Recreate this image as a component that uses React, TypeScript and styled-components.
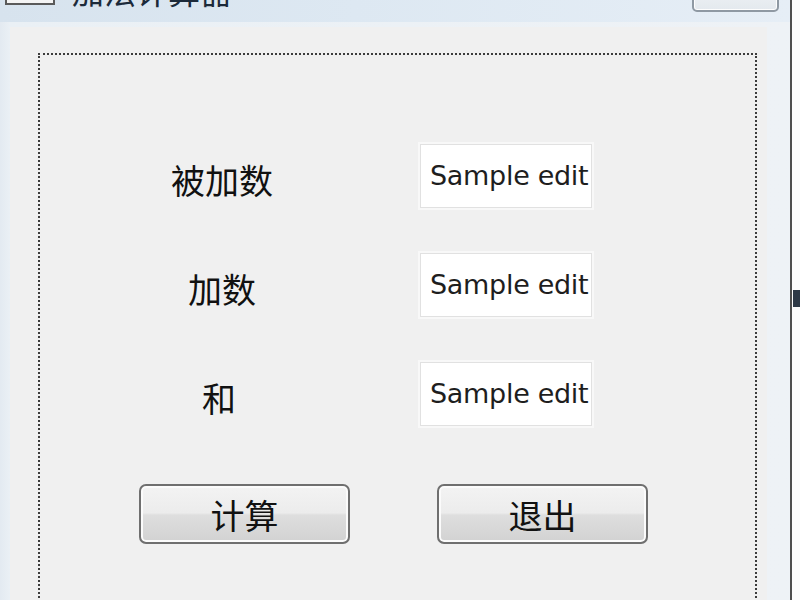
import React from 'react';
import styled, { createGlobalStyle } from 'styled-components';

const GlobalStyle = createGlobalStyle`
  html, body {
    margin: 0;
    padding: 0;
    background: #fbfbfb;
    overflow: hidden;
  }
  body {
    font-family: "Liberation Sans", "Noto Sans CJK SC", sans-serif;
  }
`;

const Page = styled.div`
  display: flex;
  width: 800px;
  height: 600px;
  overflow: hidden;
`;

const Window = styled.div`
  flex: 0 0 792px;
  box-sizing: border-box;
  height: 680px;
  margin-top: -30px;
  display: flex;
  flex-direction: column;
  border-right: 2px solid #4d4d4d;
  background: #e9eff5;
`;

const TitleBar = styled.div`
  flex: 0 0 52px;
  display: flex;
  align-items: flex-start;
  padding: 4px 11px 0 5px;
  box-sizing: border-box;
  background: linear-gradient(90deg, #d7e3ee 0%, #dde8f2 45%, #e6eef6 100%);
`;

const AppIcon = styled.div`
  width: 50px;
  height: 31px;
  box-sizing: border-box;
  border: 2px solid #5a5a5a;
  border-top-color: #8a8a8a;
  background: #f4f4f4;
`;

const Title = styled.div`
  margin: -2px 0 0 17px;
  font-family: "Noto Sans CJK SC", sans-serif;
  font-size: 32px;
  line-height: 36px;
  color: #1c2a3a;
`;

const CloseButton = styled.div`
  margin-left: auto;
  width: 87px;
  height: 38px;
  box-sizing: border-box;
  border: 2px solid #8f99a3;
  border-radius: 5px;
  background: linear-gradient(#f5f7f9, #e4e9ee);
  box-shadow: inset 0 0 0 1px #fdfdfd;
`;

const Frame = styled.div`
  flex: 1;
  display: flex;
  padding: 5px 23px 0 10px;
  background: linear-gradient(90deg, #e3eaf1 0px, #eaf0f5 10px, #eef2f6 100%);
`;

const Client = styled.div`
  flex: 1;
  background: #f0f0f0;
  padding: 26px 10px 0 28px;
  display: flex;
  flex-direction: column;
`;

const GroupBox = styled.div`
  flex: 1;
  border: 2px dotted #3c3c3c;
  border-bottom: none;
  padding: 89px 0 0 82px;
`;

const FieldGrid = styled.div`
  display: grid;
  grid-template-columns: 200px 172px;
  grid-auto-rows: 64px;
  column-gap: 98px;
  row-gap: 45px;
`;

const Label = styled.div<{ $shift?: number }>`
  display: flex;
  align-items: center;
  justify-content: center;
  padding-top: 6px;
  margin-left: ${(p) => p.$shift ?? 0}px;
  font-family: "Noto Sans CJK SC", sans-serif;
  font-size: 34px;
  color: #111111;
`;

const Edit = styled.div`
  box-sizing: border-box;
  display: flex;
  align-items: center;
  padding: 0 0 2px 9px;
  overflow: hidden;
  white-space: nowrap;
  background: #ffffff;
  border: 1px solid #e1e1e1;
  box-shadow: 0 0 0 2px #f8f8f8;
  font-family: "DejaVu Sans", "Liberation Sans", sans-serif;
  font-size: 27px;
  letter-spacing: -0.3px;
  color: #1e1e1e;
`;

const ButtonRow = styled.div`
  display: flex;
  gap: 87px;
  margin: 58px 0 0 17px;
`;

const PushButton = styled.div`
  width: 211px;
  height: 60px;
  box-sizing: border-box;
  display: flex;
  align-items: center;
  justify-content: center;
  border: 2px solid #6f6f6f;
  border-radius: 7px;
  background: linear-gradient(#f3f3f3 0%, #ececec 48%, #dedede 52%, #d2d2d2 100%);
  box-shadow: inset 0 0 0 2px #fbfbfb;
  font-family: "Noto Sans CJK SC", sans-serif;
  font-size: 34px;
  color: #111111;
`;

const Backdrop = styled.div`
  flex: 1;
  background: #fbfbfb;
  padding-top: 290px;
`;

const BehindEdge = styled.div`
  height: 17px;
  margin-left: 1px;
  background: #2e3946;
`;

const fields = [
  { label: '被加数', shift: 0 },
  { label: '加数', shift: 0 },
  { label: '和', shift: -6 },
];

const App: React.FC = () => {
  return (
    <>
      <GlobalStyle />
      <Page>
        <Window>
          <TitleBar>
            <AppIcon />
            <Title>加法计算器</Title>
            <CloseButton />
          </TitleBar>
          <Frame>
            <Client>
              <GroupBox>
                <FieldGrid>
                  {fields.map((f) => (
                    <React.Fragment key={f.label}>
                      <Label $shift={f.shift}>{f.label}</Label>
                      <Edit>Sample edit</Edit>
                    </React.Fragment>
                  ))}
                </FieldGrid>
                <ButtonRow>
                  <PushButton>计算</PushButton>
                  <PushButton>退出</PushButton>
                </ButtonRow>
              </GroupBox>
            </Client>
          </Frame>
        </Window>
        <Backdrop>
          <BehindEdge />
        </Backdrop>
      </Page>
    </>
  );
};

export default App;
